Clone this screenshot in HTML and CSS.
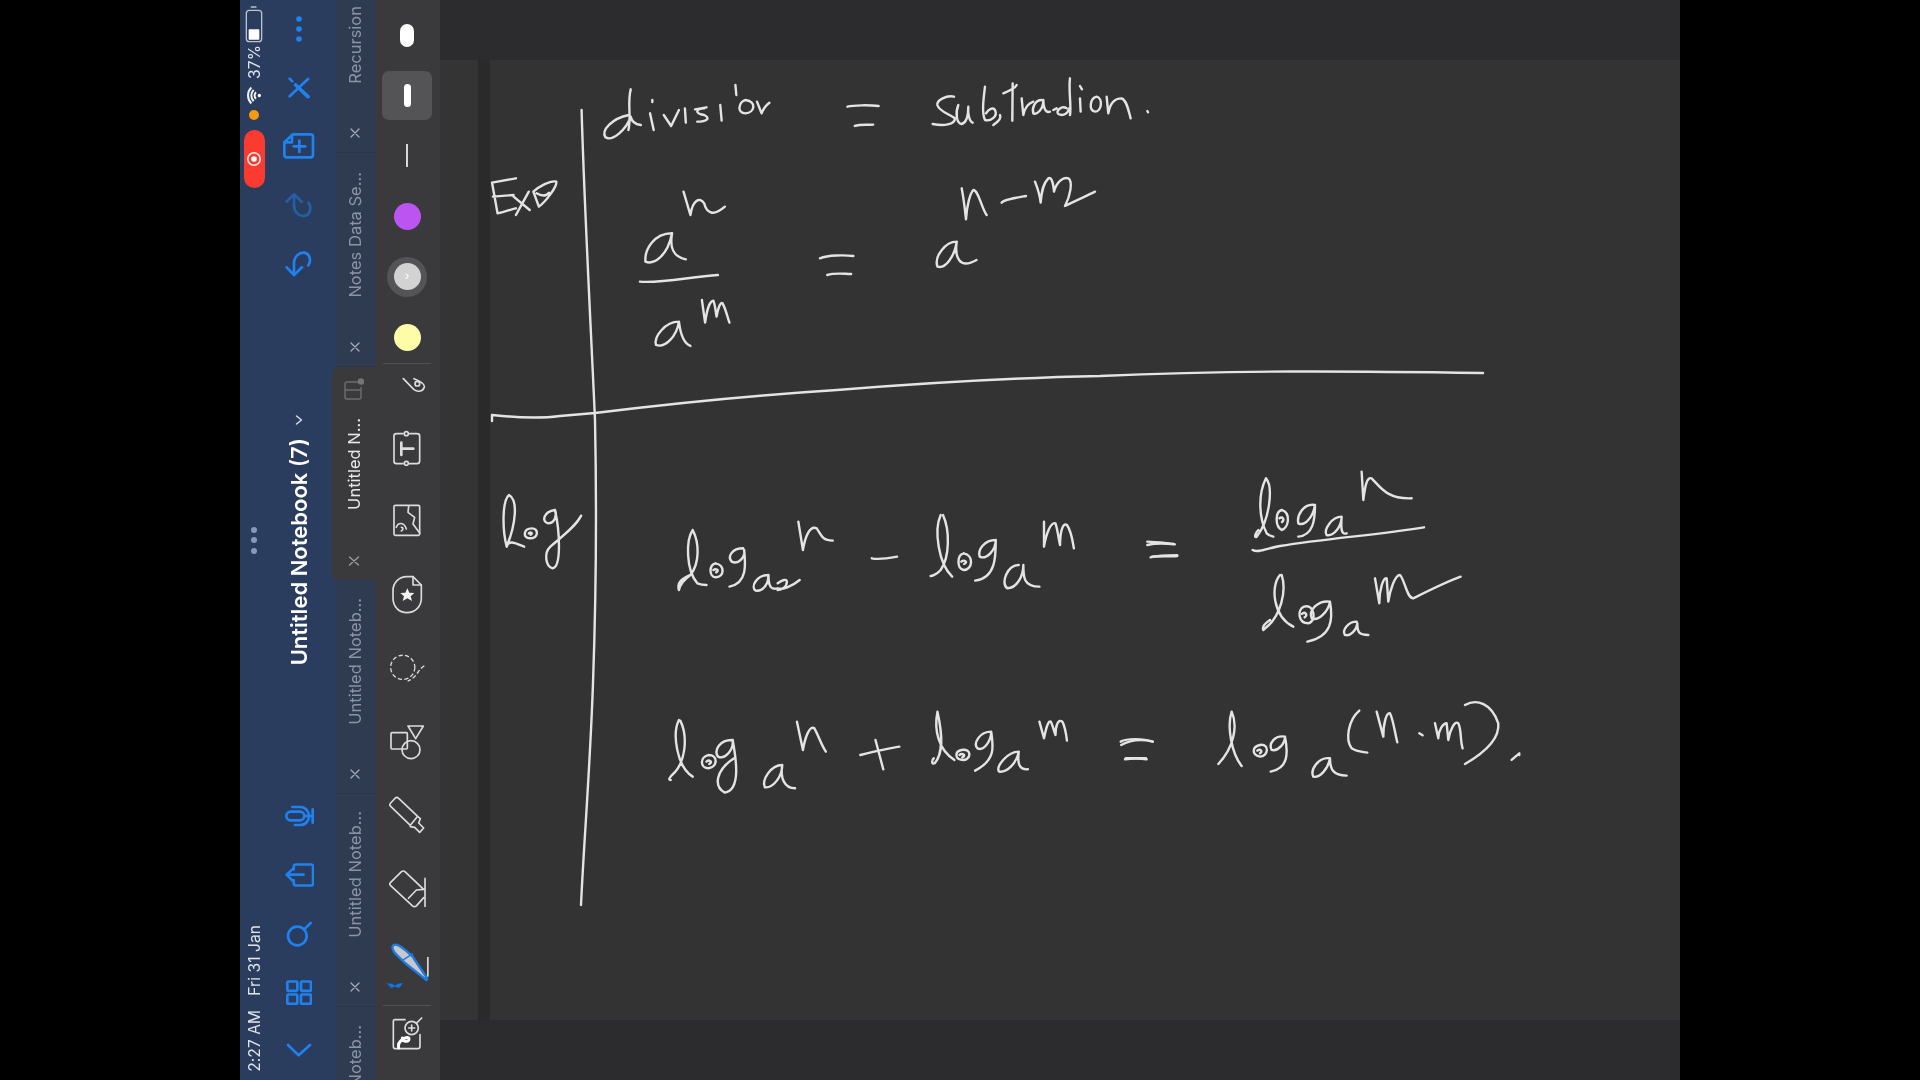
FILE: index.html
```html
<!DOCTYPE html>
<html lang="en">
<head>
<meta charset="utf-8">
<title>Untitled Notebook (7)</title>
<link rel="stylesheet" href="styles.css">
</head>
<body>
<main class="app">
  <aside class="sidebar">
    <div class="status">
      <div class="status-top">
        <svg class="i-status" width="18" height="37" viewBox="14 18 54 111"><path class="st-soft" d="M33 21h14"/><rect class="st-soft" x="18" y="31" width="46" height="94" rx="9"/><rect class="st-fill" x="25" y="88" width="32" height="31" rx="2"/></svg>
        <span class="vtext status-text pct">37%</span>
        <svg class="i-status" width="15" height="19" viewBox="16 256 45 56"><circle class="st-fill" cx="53" cy="284" r="5"/><path class="st-wifi" d="M43 274A14 14 0 0 0 43 294M36 267A24 24 0 0 0 36 301M29 260A34 34 0 0 0 29 308"/></svg>
        <span class="orange-dot"></span>
        <div class="record">
          <svg width="16" height="16" viewBox="0 0 16 16"><circle class="rec-ring" cx="8" cy="8" r="6.2"/><circle class="rec-dot" cx="8" cy="8" r="2.8"/></svg>
        </div>
      </div>
      <div class="grab"><span></span><span></span><span></span></div>
      <div class="status-bottom vtext status-text"><span>2:27 AM</span><span>Fri 31 Jan</span></div>
    </div>
    <nav class="nav">
      <div class="nav-group">
        <div class="nav-btn"><svg width="8" height="26" viewBox="0 0 8 26"><circle class="b-fill" cx="4" cy="3" r="2.8"/><circle class="b-fill" cx="4" cy="13" r="2.8"/><circle class="b-fill" cx="4" cy="23" r="2.8"/></svg></div>
        <div class="nav-btn"><svg width="22" height="22" viewBox="145 232 66 66"><path class="b-line" d="M205 238L150 290"/><path class="b-line thick" d="M168 256L205 291"/><path class="b-line" d="M150 237l8 8"/></svg></div>
        <div class="nav-btn"><svg width="32" height="26" viewBox="128 400 96 78"><path class="b-line" d="M158 404H210Q218 404 218 412V465Q218 473 210 473H140Q132 473 132 465V428Z"/><path class="b-line" d="M177 423V457M160 440H195"/><path class="b-line" d="M155 406V428H132"/></svg></div>
        <div class="nav-btn dim"><svg width="30" height="28" viewBox="135 575 90 84"><path class="b-line" d="M143 607L165 585L188 607M165 587V618C165 640 180 650 193 650C212 650 220 625 208 610"/></svg></div>
        <div class="nav-btn"><svg width="30" height="28" viewBox="135 750 90 84"><path class="b-line" d="M143 802L165 825L189 802M165 823V790C165 768 182 757 195 758C212 760 218 782 208 796"/></svg></div>
      </div>
      <div class="title-group">
        <svg width="8" height="10" viewBox="0 0 8 10"><path class="w-line" d="M1.5 1L6.5 5L1.5 9"/></svg>
        <h1 class="vtext title">Untitled Notebook (7)</h1>
      </div>
      <div class="nav-group end">
        <div class="nav-btn"><svg width="30" height="22" viewBox="130 255 90 66"><rect class="b-line" x="137" y="275" width="54" height="26" rx="13"/><path class="b-line" d="M155 261H178C195 261 205 275 205 288C205 302 195 315 178 315H163M192 288H216M216 268V308"/></svg></div>
        <div class="nav-btn"><svg width="30" height="24" viewBox="130 428 92 72"><path class="b-line" d="M160 447V438Q160 432 167 432H213Q219 432 219 438V490Q219 496 213 496H167Q160 496 160 490V480M190 463H140M156 446L138 463L156 481"/></svg></div>
        <div class="nav-btn"><svg width="28" height="26" viewBox="135 600 84 78"><circle class="b-line" cx="172" cy="645" r="28"/><path class="b-line" d="M192 626L212 606"/></svg></div>
        <div class="nav-btn"><svg width="26" height="25" viewBox="138 779 78 74"><rect class="b-line" x="142" y="783" width="30" height="28" rx="3"/><rect class="b-line" x="183" y="783" width="30" height="28" rx="3"/><rect class="b-line" x="142" y="822" width="30" height="28" rx="3"/><rect class="b-line" x="183" y="822" width="30" height="28" rx="3"/></svg></div>
        <div class="nav-btn"><svg width="26" height="15" viewBox="140 975 78 45"><path class="b-line" d="M146 981L178 1012L212 981"/></svg></div>
      </div>
    </nav>
  </aside>

  <section class="tabs">
    <div class="tab first"><span class="vtext tab-label">Recursion</span><svg class="tab-x" width="12" height="12" viewBox="0 0 12 12"><path d="M2 2L10 10M10 2L2 10"/></svg></div>
    <div class="tab"><span class="vtext tab-label">Notes Data Se...</span><svg class="tab-x" width="12" height="12" viewBox="0 0 12 12"><path d="M2 2L10 10M10 2L2 10"/></svg></div>
    <div class="tab active">
      <svg class="tab-page" width="20" height="22" viewBox="0 0 20 22"><path d="M14 4H3Q1 4 1 6V19Q1 21 3 21H15Q17 21 17 19V9M1 12H17"/><circle cx="17" cy="3.5" r="3.3"/></svg>
      <span class="vtext tab-label">Untitled N...</span><svg class="tab-x" width="12" height="12" viewBox="0 0 12 12"><path d="M1.5 2L10.5 10M10.5 2L1.5 10"/></svg>
    </div>
    <div class="tab"><span class="vtext tab-label">Untitled Noteb...</span><svg class="tab-x" width="12" height="12" viewBox="0 0 12 12"><path d="M2 2L10 10M10 2L2 10"/></svg></div>
    <div class="tab"><span class="vtext tab-label">Untitled Noteb...</span><svg class="tab-x" width="12" height="12" viewBox="0 0 12 12"><path d="M2 2L10 10M10 2L2 10"/></svg></div>
    <div class="tab"><span class="vtext tab-label">Untitled Noteb...</span><svg class="tab-x" width="12" height="12" viewBox="0 0 12 12"><path d="M2 2L10 10M10 2L2 10"/></svg></div>
  </section>

  <section class="toolbar">
    <div class="swatches">
      <div class="swatch"><span class="nib nib-lg"></span></div>
      <div class="swatch"><span class="nib-box"><span class="nib nib-md"></span></span></div>
      <div class="swatch"><span class="nib nib-sm"></span></div>
      <div class="swatch"><span class="dot dot-purple"></span></div>
      <div class="swatch"><span class="dot-ring"><span class="dot dot-grey">›</span></span></div>
      <div class="swatch last"><span class="dot dot-yellow"></span></div>
    </div>
    <div class="divider"></div>
    <div class="tool partial"><svg width="24" height="18" viewBox="486 50 72 54"><path class="t-line" d="M490 55L522 88C535 97 550 92 553 80C555 70 540 62 522 55"/><circle class="t-line" cx="532" cy="70" r="7"/></svg></div>
    <div class="tool"><svg width="30" height="36" viewBox="462 207 90 108"><path class="t-line" d="M495 218H475Q468 218 468 225V300Q468 308 475 308H495M515 218H537Q545 218 545 225V300Q545 308 537 308H515"/><circle class="t-line" cx="505" cy="218" r="6"/><circle class="t-line" cx="505" cy="307" r="6"/><path class="t-line thick" d="M490 245V282M490 263H526"/></svg></div>
    <div class="tool"><svg width="30" height="36" viewBox="462 432 90 108"><rect class="t-line" x="468" y="439" width="77" height="90" rx="4"/><path class="t-line" d="M512 442L510 460L530 475L525 495L545 522"/><path class="t-line" d="M475 505C480 490 498 488 505 510M490 505C496 505 497 512 490 516"/></svg></div>
    <div class="tool"><svg width="32" height="42" viewBox="454 642 96 126"><path class="t-line" d="M520 650H502C478 650 460 668 460 692V715C460 740 478 758 502 758C526 758 545 740 545 715V675Z"/><path class="t-line" d="M520 650V675H545"/><path class="t-fill" d="M503 685L509 698L524 699L513 709L517 723L503 715L489 723L493 709L482 699L497 698Z"/></svg></div>
    <div class="tool"><svg width="36" height="34" viewBox="448 872 110 100"><circle class="t-line dashed" cx="490" cy="920" r="37"/><path class="t-line dashed" d="M556 915C535 928 535 950 505 962"/></svg></div>
    <div class="tool"><svg width="36" height="36" viewBox="450 10 108 108"><rect class="t-line" x="456" y="36" width="49" height="49" rx="3"/><path class="t-line" d="M507 16H553L530 54Z"/><circle class="t-line" cx="516" cy="87" r="27"/></svg></div>
    <div class="tool"><svg width="38" height="38" viewBox="444 224 112 114"><path class="t-line" d="M465 230Q470 226 475 231L532 285L510 312L451 255Q446 250 451 245ZM532 285L540 292L535 305L550 320L538 333L523 318L510 316L510 312"/></svg></div>
    <div class="tool"><svg width="39" height="40" viewBox="444 442 118 120"><path class="t-line" d="M484 450L452 482Q447 487 452 492L518 553Q524 558 530 553L552 528M484 450Q490 445 496 450L552 503M506 530L530 505L552 503M556 470V555"/></svg></div>
    <div class="tool pen"><svg width="44" height="47" viewBox="428 665 132 142"><path class="pen-body" d="M452 675C465 665 490 690 510 708L555 775L553 780L490 730C470 710 442 690 452 675Z"/><path class="pen-glow" d="M478 722L512 700"/><path class="t-line" d="M557 712V768"/><path class="pen-mark" d="M433 790C445 790 452 792 458 797C465 790 472 788 482 790L470 804L458 800L446 804Z"/></svg></div>
    <div class="divider lower"></div>
    <div class="tool zoom"><svg width="32" height="34" viewBox="458 892 96 102"><path class="t-line" d="M500 900H470Q465 900 465 905V980Q465 987 470 987H538Q545 987 545 980V945"/><circle class="t-line" cx="520" cy="925" r="20"/><path class="t-line" d="M534 911L550 895M520 916V934M511 925H529"/><path class="t-line heavy" d="M481 985C475 962 512 945 512 958C512 970 490 965 492 955"/></svg></div>
  </section>

  <section class="canvas">
    <div class="band"></div>
    <div class="workspace">
      <div class="gutter"></div>
      <div class="gutter-dark"></div>
      <div class="page">
        <svg class="ink" width="1190" height="960" viewBox="490 60 1190 960" role="img" aria-label="Handwritten notes: division = subtraction; exp and log rules">
          <path d="M581.6 110C584 200 591 330 595 420C597 520 596 600 593 683C590 770 584 840 581 905"/>
          <path d="M492 421V415C520 418 545 418 560 416L595 413C700 400 790 393 837 390C950 381 1050 377 1100 376C1230 370 1350 371 1483 373"/>
          <g transform="translate(470 50) scale(0.4592 0.3333)">
            <path d="M350 118C342 160 352 200 345 240M346 195C310 205 285 240 295 262C310 275 340 240 350 200C352 215 358 222 372 225"/>
            <path d="M392 190L400 240M397 150V156"/>
            <path d="M422 195L438 228L455 180M468 175L470 218"/>
            <path d="M490 178L515 172M510 175C490 178 490 190 510 195C525 205 515 215 495 215"/>
            <path d="M545 165L548 212M578 105L580 135"/>
            <path d="M600 150C585 155 580 190 600 190C620 188 625 155 600 150M625 155L635 190C640 172 645 165 652 158"/>
            <path d="M822 170C835 165 870 165 890 168M838 228C850 222 865 225 878 224"/>
            <path d="M100 385L48 398L60 490C75 485 90 478 100 475M50 440L95 435M95 440L130 480M128 425L100 495"/>
            <path d="M150 470L138 425C150 410 175 390 188 395C190 410 165 455 150 470M145 430C155 438 165 440 172 428"/>
            <path d="M465 425L480 495C485 450 500 440 510 460C515 490 530 500 555 470"/>
            <path d="M440 550C400 550 380 600 382 635C400 645 430 620 440 550C435 590 440 620 470 628"/>
            <path d="M370 695C420 700 480 680 540 675"/>
            <path d="M455 815C425 815 400 860 405 885C425 895 450 860 455 815C458 850 465 880 480 888"/>
            <path d="M505 750L512 818C516 780 520 755 530 752C535 770 535 790 537 800C540 775 545 755 550 760C558 780 560 800 565 818"/>
            <path d="M762 625C780 615 815 615 835 618M778 675C795 668 815 672 830 672"/>
            <path d="M1060 575C1035 575 1010 620 1018 650C1035 658 1055 620 1060 575C1055 620 1065 660 1103 630"/>
          </g>
          <g transform="translate(880 50) scale(0.3333)">
            <path d="M222 140C200 135 170 150 172 165C178 185 205 190 225 205C225 225 190 228 158 222"/>
            <path d="M235 165C225 190 230 220 245 222C258 218 265 200 265 170C263 190 268 215 278 218"/>
            <path d="M315 110C310 150 305 190 315 210C330 215 355 200 345 180C340 170 325 178 318 190M340 225C355 215 365 205 360 195"/>
            <path d="M398 100L397 212M370 130C390 122 405 115 410 105"/>
            <path d="M425 145L430 195C435 170 445 160 460 155"/>
            <path d="M485 150C465 150 455 175 460 190C470 195 490 180 490 150C490 170 495 190 510 185"/>
            <path d="M570 85C565 120 575 170 570 195M560 175C545 165 525 185 535 192C550 200 565 190 568 175M520 180L530 175"/>
            <path d="M600 145L602 185M600 108L606 118"/>
            <path d="M650 140C630 145 625 180 645 185C665 185 670 145 650 140"/>
            <path d="M680 140L685 190C690 160 705 145 725 145C740 150 745 180 752 205"/>
            <path d="M802 183L804 187"/>
            <path d="M245 415C250 440 255 480 258 508C260 470 270 430 280 420C295 420 305 475 320 495"/>
            <path d="M365 458C370 450 400 445 438 438"/>
            <path d="M465 395C475 420 480 440 482 458C485 420 490 400 505 385C515 380 520 400 522 425C530 395 550 380 565 385C580 395 570 440 555 468C590 450 620 438 645 425"/>
          </g>
          <g transform="translate(470 450) scale(0.4592 0.3333)">
            <path d="M80 290C70 240 70 150 85 135C105 150 100 220 80 290C85 265 105 285 118 290"/>
            <path d="M135 235C115 235 115 265 130 265C150 265 150 235 135 235M128 250C132 245 138 250 132 254"/>
            <path d="M185 180C160 185 155 215 170 220C185 220 190 195 185 180C195 240 200 350 180 355C165 350 160 310 175 290C200 260 230 230 242 197"/>
            <path d="M485 240C470 270 470 360 495 400C505 405 515 405 515 405M485 240C500 280 500 340 480 375C470 385 458 400 455 420C450 400 462 385 480 375"/>
            <path d="M535 340C520 345 520 380 535 382C555 380 555 345 535 340M530 360C536 354 544 362 536 367"/>
            <path d="M595 295C570 295 560 320 570 335C585 345 600 320 597 300C600 340 605 400 565 410"/>
            <path d="M650 375C625 375 610 410 622 422C640 425 650 400 650 375C650 410 655 420 670 415C680 420 700 410 718 390M670 400C680 390 690 385 690 395C690 410 680 420 670 420"/>
            <path d="M715 215L725 300C730 260 740 225 755 235C765 255 765 270 790 272"/>
            <path d="M875 325C890 330 910 325 930 320"/>
            <path d="M1025 195C1010 240 1020 340 1050 380M1030 195C1045 240 1045 320 1025 360C1015 375 1005 378 1003 378"/>
            <path d="M1075 310C1060 315 1060 355 1075 360C1095 360 1098 315 1075 310M1070 335C1076 328 1086 336 1076 342"/>
            <path d="M1145 270C1120 270 1105 300 1110 320C1125 330 1145 300 1145 270C1145 320 1145 385 1100 392"/>
            <path d="M1195 345C1170 345 1155 400 1170 415C1190 415 1205 380 1205 345C1205 380 1205 410 1240 410"/>
            <path d="M1250 215L1250 290C1255 250 1265 215 1275 220C1280 240 1282 270 1285 285C1285 250 1290 215 1300 225C1310 245 1312 270 1315 295"/>
            <path d="M1475 285C1490 280 1515 280 1535 283M1482 322C1500 316 1520 316 1540 316"/>
            <path d="M455 810C440 850 450 950 485 980M458 812C475 860 470 940 440 975C430 990 435 990 437 990"/>
            <path d="M520 915C500 920 500 955 520 955C540 950 540 915 520 915M515 935C521 928 530 936 521 942"/>
            <path d="M570 870C545 870 530 900 540 920C555 930 575 900 572 870C580 930 590 1020 555 1028C530 1010 535 960 575 925"/>
            <path d="M680 945C655 945 635 990 642 1012C660 1015 680 980 680 945C675 985 685 1015 708 1015"/>
            <path d="M712 815L725 900C730 860 740 825 750 835C760 860 765 885 775 905"/>
            <path d="M850 915C880 905 910 895 935 890M883 870L900 958"/>
            <path d="M1018 785C1010 840 1020 900 1055 930M1018 785C1030 860 1030 910 1012 940C1005 945 1005 930 1010 925"/>
            <path d="M1070 900C1055 905 1055 930 1075 930C1090 930 1095 895 1070 900M1066 915C1072 908 1082 916 1072 922"/>
            <path d="M1135 845C1110 845 1095 880 1105 895C1120 905 1135 870 1135 845C1140 890 1145 930 1100 962"/>
            <path d="M1195 905C1170 905 1145 950 1152 965C1170 968 1190 940 1195 905C1192 940 1195 960 1215 958"/>
            <path d="M1240 815L1250 865C1255 830 1260 810 1265 815C1270 830 1272 845 1275 855C1275 830 1280 805 1290 815C1296 830 1298 850 1300 872"/>
            <path d="M1418 885C1440 868 1465 868 1487 875M1428 925C1445 925 1460 925 1472 925"/>
          </g>
          <g transform="translate(1100 340) scale(0.3333)">
            <path d="M142 605C165 605 200 610 222 612M155 650C175 648 210 650 232 648"/>
            <path d="M498 415C475 460 475 530 500 580C505 585 512 588 520 590M498 415C520 440 510 540 470 590C462 595 465 580 475 570"/>
            <path d="M545 510C525 515 525 560 545 570C565 565 575 520 545 510M538 535C546 528 556 538 546 546"/>
            <path d="M645 495C610 490 590 525 595 550C615 560 640 530 645 495C645 540 640 585 595 590"/>
            <path d="M725 530C695 530 670 570 680 585C700 590 725 560 725 530C722 570 725 585 740 580"/>
            <path d="M785 395L790 480C795 440 800 410 815 415C840 440 860 478 935 475"/>
            <path d="M458 630C475 640 500 625 540 618C680 595 830 585 972 562"/>
            <path d="M540 705C510 740 520 830 580 860M545 705C560 750 545 830 490 870C485 860 495 850 510 840"/>
            <path d="M612 800C590 810 595 850 625 850C650 845 645 790 612 800M606 822C614 814 626 824 614 832"/>
            <path d="M690 785C655 780 625 810 635 835C655 845 685 815 690 785C700 840 695 890 622 905"/>
            <path d="M770 845C745 845 725 870 735 885C750 890 770 870 772 850C772 875 775 885 805 885"/>
            <path d="M825 715L838 790C838 750 850 710 860 715L865 785C870 750 885 705 900 705C915 720 920 775 940 775C980 755 1040 725 1082 710"/>
            <path d="M62 1205C80 1195 130 1195 158 1205M75 1258C95 1255 120 1255 140 1258"/>
            <path d="M395 1115C380 1160 395 1240 425 1278M395 1115C415 1160 400 1225 355 1272"/>
            <path d="M480 1215C455 1220 455 1245 480 1250C505 1250 510 1210 480 1215M472 1232C480 1225 490 1234 480 1240"/>
            <path d="M555 1190C525 1185 505 1210 515 1230C535 1235 555 1210 555 1190C565 1240 565 1285 512 1295"/>
            <path d="M690 1255C655 1250 630 1290 640 1310C660 1315 685 1285 690 1255C690 1290 700 1305 740 1307"/>
            <path d="M778 1112C745 1140 735 1200 755 1225C770 1235 785 1235 802 1238"/>
            <path d="M830 1115L850 1190C850 1150 860 1115 870 1120C880 1140 885 1180 892 1207"/>
            <path d="M958 1180L968 1186"/>
            <path d="M1005 1150L1015 1195C1015 1170 1030 1150 1040 1150L1045 1200C1050 1170 1065 1140 1075 1150C1085 1170 1080 1200 1088 1225"/>
            <path d="M1095 1095C1130 1075 1175 1090 1195 1150C1200 1200 1150 1240 1095 1272"/>
            <path d="M1235 1260L1258 1240V1245"/>
          </g>
        </svg>
      </div>
    </div>
    <div class="band"></div>
  </section>
</main>
</body>
</html>
```

FILE: styles.css
```css
* { box-sizing: border-box; }
html, body { margin: 0; height: 100%; background: #000; overflow: hidden; }
body { display: flex; justify-content: center; font-family: Inter, "Noto Sans", sans-serif; }
svg { display: block; flex: none; }

.vtext { writing-mode: vertical-rl; transform: rotate(180deg); white-space: nowrap; }

.app { width: 1440px; height: 1080px; display: flex; overflow: hidden; background: #333; }

/* blue rail */
.sidebar { width: 96px; flex: none; display: flex; background: #2b3d5e; }
.status { width: 28px; flex: none; display: grid; grid-template-rows: 1fr auto 1fr; justify-items: center; }
.status-top { display: flex; flex-direction: column; align-items: center; padding-top: 6px; }
.status-text { color: #dfe3ea; font-size: 15.5px; letter-spacing: .1px; }
.pct { margin-top: 2px; margin-bottom: 7px; }
.orange-dot { width: 10px; height: 10px; border-radius: 50%; background: #f79a0e; margin-top: 5px; margin-bottom: 10px; }
.record { width: 21px; height: 58px; border-radius: 11px; background: #fb3b30; display: flex; align-items: center; justify-content: center; }
.rec-ring { fill: none; stroke: #fff; stroke-width: 1.6; opacity: .9; }
.rec-dot { fill: #fff; }
.st-soft { fill: none; stroke: #b9c2d0; stroke-width: 4; stroke-linecap: round; }
.st-fill { fill: #fff; }
.st-wifi { fill: none; stroke: #eef0f4; stroke-width: 6; stroke-linecap: butt; }
.grab { display: flex; flex-direction: column; gap: 4.5px; }
.grab span { width: 6px; height: 6px; border-radius: 50%; background: #8599ba; }
.status-bottom { align-self: end; display: flex; gap: 14px; margin-bottom: 8px; }

.nav { width: 62px; flex: none; display: grid; grid-template-rows: 1fr auto 1fr; justify-items: center; }
.nav-group { display: flex; flex-direction: column; align-self: start; }
.nav-group.end { align-self: end; }
.nav-btn { width: 62px; height: 58.6px; display: flex; align-items: center; justify-content: center; }
.nav-btn.dim { opacity: .5; }
.b-fill { fill: #1f82ee; }
.b-line { fill: none; stroke: #1f82ee; stroke-width: 8; stroke-linecap: round; stroke-linejoin: round; }
.b-line.thick { stroke-width: 11; }
.w-line { fill: none; stroke: #dbe2ee; stroke-width: 1.4; stroke-linecap: round; stroke-linejoin: round; }
.title-group { display: flex; flex-direction: column; align-items: center; gap: 13px; }
.title { margin: 0; color: #fff; font-size: 22px; font-weight: 600; line-height: 26px; }

/* tab strip */
.tabs { width: 40px; flex: none; display: flex; flex-direction: column; background: #2f3b50; }
.tab { height: 213.5px; flex: none; display: flex; flex-direction: column; align-items: center; justify-content: flex-end; padding: 0 2px 13px 0; border-bottom: 1px solid #2b3548; }
.tab.first { height: 153px; }
.tab-label { color: #8c94a3; font-size: 16.5px; line-height: 20px; margin-bottom: 43px; }
.tab-x { stroke: #a5abb5; stroke-width: 1.3; stroke-linecap: round; fill: none; }
.tab.active { margin-left: -4px; width: 44px; background: #3a3a3c; border: 0; border-radius: 7px 0 0 7px; padding-right: 0; }
.tab.active .tab-label { color: #e8e8e8; margin-bottom: 45px; }
.tab.active .tab-x { stroke: #a0a0a0; }
.tab-page { margin-bottom: auto; margin-top: 11px; stroke: #6e6e70; stroke-width: 1.4; fill: none; }
.tab-page circle { fill: #747476; stroke: none; }

/* tools */
.toolbar { width: 64px; flex: none; display: flex; flex-direction: column; align-items: center; background: #3a3a3c; padding: 5px 2px 0 0; }
.swatches { width: 100%; display: flex; flex-direction: column; align-items: center; }
.swatch { width: 100%; height: 60.4px; display: flex; align-items: center; justify-content: center; }
.swatch.last { height: 56px; padding-top: 5px; }
.nib { display: block; background: #fff; }
.nib-lg { width: 14px; height: 23px; border-radius: 7px; }
.nib-md { width: 7px; height: 23px; border-radius: 4px; }
.nib-sm { width: 2.5px; height: 23px; background: #d8d8d8; }
.nib-box { width: 50px; height: 49px; border-radius: 7px; background: #545456; display: flex; align-items: center; justify-content: center; }
.dot { display: block; width: 27px; height: 27px; border-radius: 50%; }
.dot-purple { background: #bc54f2; }
.dot-yellow { background: #fdfca9; }
.dot-ring { width: 40px; height: 40px; border-radius: 50%; background: #545456; display: flex; align-items: center; justify-content: center; }
.dot-grey { background: #d2d2d2; color: #fff; font-size: 12px; line-height: 26px; text-align: center; }
.divider { width: 48px; height: 1px; background: #515153; flex: none; }
.divider.lower { margin-top: 6px; }
.tool { width: 100%; height: 73.5px; flex: none; display: flex; align-items: center; justify-content: center; }
.tool.partial { height: 47px; align-items: flex-start; padding: 13px 0 0 14px; }
.tool.pen svg { margin-top: 6px; }
.tool.zoom { height: 56px; }
.t-line { fill: none; stroke: #dcdcdc; stroke-width: 5; stroke-linecap: round; stroke-linejoin: round; }
.t-line.thick { stroke-width: 8; }
.t-line.heavy { stroke: #fff; stroke-width: 9; }
.t-line.dashed { stroke-width: 4; stroke-dasharray: 13 7; stroke-linecap: butt; }
.t-fill { fill: #f2f2f2; }
.pen-body { fill: #c8c8ca; stroke: #1f7be0; stroke-width: 7; stroke-linejoin: round; }
.pen-glow { stroke: #1f7be0; stroke-width: 4; fill: none; }
.pen-mark { fill: #0f74e6; }

/* canvas */
.canvas { flex: 1; min-width: 0; display: flex; flex-direction: column; }
.band { height: 60px; flex: none; background: #2c2c2e; }
.workspace { flex: 1; min-height: 0; display: flex; }
.gutter { width: 38px; flex: none; background: #343434; }
.gutter-dark { width: 12px; flex: none; background: #2a2a2b; }
.page { flex: 1; min-width: 0; background: #333; }
.ink { filter: blur(.4px); }
.ink path { fill: none; stroke: #e4e4e4; stroke-width: 2.4; stroke-linecap: round; stroke-linejoin: round; vector-effect: non-scaling-stroke; }
```
